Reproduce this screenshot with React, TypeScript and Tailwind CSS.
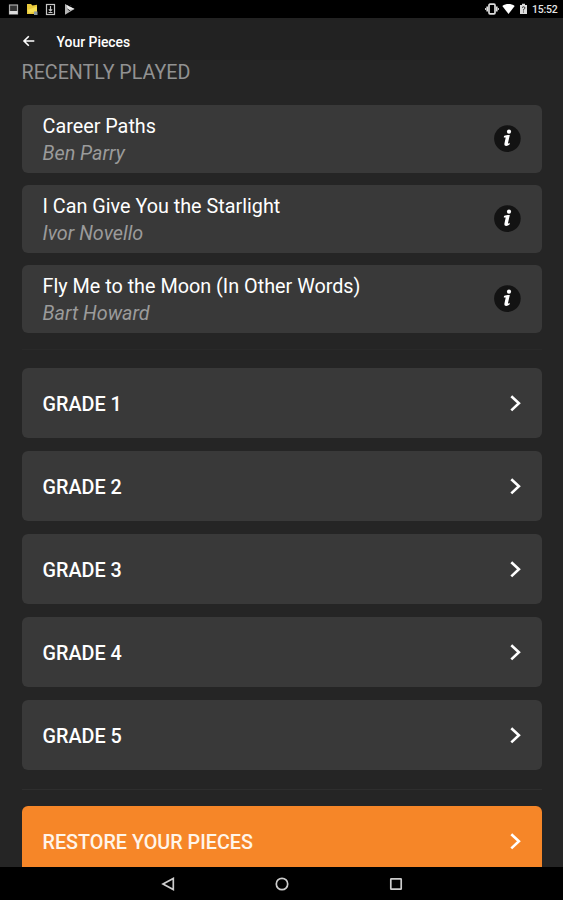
import React from "react";

const recent = [
  { title: "Career Paths", author: "Ben Parry" },
  { title: "I Can Give You the Starlight", author: "Ivor Novello" },
  { title: "Fly Me to the Moon (In Other Words)", author: "Bart Howard" },
];

const grades = ["GRADE 1", "GRADE 2", "GRADE 3", "GRADE 4", "GRADE 5"];

function Chevron() {
  return (
    <svg width="14" height="20" viewBox="0 0 14 20" fill="none" stroke="#fff" strokeWidth="2.6">
      <path d="M2.3 3.2 L9.9 10.3 L2.3 17.4" />
    </svg>
  );
}

function InfoIcon() {
  return (
    <svg width="28" height="28" viewBox="0 0 28 28">
      <circle cx="14.4" cy="13.6" r="13.3" fill="#131313" />
      <circle cx="16" cy="6.7" r="2.1" fill="#fff" />
      <path
        d="M11 11 C12.6 10.1 14.4 9.8 16.8 9.9 L15 17.9 C14.9 18.7 15.6 18.5 16.8 17.8 L16.4 19.8 C14.4 21.3 11 21.6 11.4 18.8 L12.7 12.5 L10.8 12.5 Z"
        fill="#fff"
      />
    </svg>
  );
}

function StatusBar() {
  return (
    <div className="flex h-[18px] shrink-0 items-center justify-between bg-black pr-[5px] pl-[7px]">
      <div className="flex items-center gap-[5.5px]">
        <svg width="13" height="14" viewBox="0 0 13 14">
          <rect x="2.5" y="3" width="8" height="9" fill="#333" stroke="#aaa" strokeWidth="1.2" />
          <path d="M2.5 9 H10.5 V12 H2.5Z" fill="#ddd" />
        </svg>
        <svg width="13" height="14" viewBox="0 0 13 14">
          <path d="M1 2 H5 L6.5 3.5 L11 2.7 V12 L1 12Z" fill="#e8c83b" />
          <path d="M1.5 8 L11 4.5 V9 L3 11Z" fill="#f6df55" />
          <rect x="8" y="9.5" width="3.5" height="3.5" fill="#8c9aa0" />
        </svg>
        <svg width="13" height="14" viewBox="0 0 13 14" fill="none" stroke="#c6c6c6" strokeWidth="1.2">
          <rect x="2.5" y="2.5" width="8" height="10" />
          <path d="M6.5 4 V9 M4.8 7.3 L6.5 9 L8.2 7.3 M4.5 10.5 H8.5" />
        </svg>
        <svg width="13" height="14" viewBox="0 0 13 14">
          <path d="M2 2 L11.5 7 L2 12.8Z" fill="#b5b5b5" />
          <path d="M3.5 3 L11.5 7 L5 8Z" fill="#eee" />
          <path d="M4.5 7 L7 8.8 M7 5 L8 3" stroke="#333" />
        </svg>
      </div>
      <div className="flex items-center">
        <svg width="14" height="12" viewBox="0 0 14 12" fill="none" stroke="#ddd" strokeWidth="1.7">
          <rect x="4" y="1.2" width="6" height="9.6" rx="1" />
          <path d="M2.2 3.5 V8.5 M11.8 3.5 V8.5" />
          <path d="M.6 5 V7 M13.4 5 V7" strokeWidth="1" />
        </svg>
        <svg className="ml-[3px]" width="13" height="12" viewBox="0 0 13 12">
          <path d="M.3 3 C4 .4 9 .4 12.7 3 L6.5 11Z" fill="#fff" />
        </svg>
        <svg className="ml-[4px]" width="9" height="12" viewBox="0 0 9 12">
          <path d="M1 2 H3 V.8 H6 V2 H8 V11 H1Z" fill="#ddd" />
          <path d="M3 4.5 Q4.5 3 6 4.5 Q6 6 4.5 6.5 V7.5 M4.5 8.5 V9.5" stroke="#333" fill="none" />
        </svg>
        <span className="ml-[4px] w-[26px] pt-[2px] text-[10.5px] leading-3 font-medium tracking-[-0.2px] whitespace-nowrap text-[#e4e4e4]">
          15:52
        </span>
      </div>
    </div>
  );
}

export default function App() {
  return (
    <div className="flex h-[900px] w-[563px] flex-col overflow-hidden bg-[#252525] font-[Roboto,sans-serif] text-white">
      <StatusBar />
      <header className="flex h-[42px] shrink-0 items-center bg-[#222222] pt-1 pl-[22px]">
        <svg width="14" height="14" viewBox="0 0 14 14" fill="none" stroke="#fff" strokeWidth="1.6">
          <path d="M12.3 7 H2 M6.8 2.2 L2 7 L6.8 11.8" />
        </svg>
        <h1 className="ml-[20.5px] pt-px text-[13.9px] leading-5 font-medium whitespace-nowrap">
          Your Pieces
        </h1>
      </header>
      <main className="min-h-0 flex-1 overflow-hidden px-[21.5px]">
        <h2 className="h-[44.5px] pt-px text-[19.7px] leading-6 text-[#929292]">RECENTLY PLAYED</h2>
        <div className="flex flex-col gap-3">
          {recent.map((piece) => (
            <div
              key={piece.title}
              className="flex h-[68px] items-center justify-between rounded-[6px] bg-[#393939] pr-[20.5px] pl-[21px]"
            >
              <div className="pt-[3px] text-[19.8px] leading-[27px] whitespace-nowrap">
                <div>{piece.title}</div>
                <div className="text-[#9b9b9b] italic">{piece.author}</div>
              </div>
              <InfoIcon />
            </div>
          ))}
        </div>
        <div className="mt-4 mb-[18.5px] h-px bg-[#292929]" />
        <div className="flex flex-col gap-[13px]">
          {grades.map((grade) => (
            <div
              key={grade}
              className="flex h-[70px] items-center justify-between rounded-[6px] bg-[#393939] pr-[19px] pl-[21px]"
            >
              <span className="pt-[4px] text-[19.8px] font-medium">{grade}</span>
              <Chevron />
            </div>
          ))}
        </div>
        <div className="mt-[18.5px] mb-[16.5px] h-px bg-[#2e2e2e]" />
        <div className="flex h-[70px] items-center justify-between rounded-[6px] bg-[#f68628] pr-[19px] pl-[21px]">
          <span className="pt-[4px] text-[19.75px] font-medium text-[#fff5ea]">RESTORE YOUR PIECES</span>
          <Chevron />
        </div>
      </main>
      <nav className="flex h-[33px] shrink-0 items-center justify-center gap-[98px] bg-black">
        <svg width="16" height="16" viewBox="0 0 16 16" fill="none" stroke="#ccc" strokeWidth="1.7">
          <path d="M13.3 2.5 V13.5 L3 8Z" />
        </svg>
        <svg width="16" height="16" viewBox="0 0 16 16" fill="none" stroke="#ccc" strokeWidth="1.7">
          <circle cx="8" cy="8" r="5.7" />
        </svg>
        <svg width="16" height="16" viewBox="0 0 16 16" fill="none" stroke="#ccc" strokeWidth="1.7">
          <rect x="2.8" y="2.8" width="10.4" height="10.4" rx=".5" />
        </svg>
      </nav>
    </div>
  );
}
